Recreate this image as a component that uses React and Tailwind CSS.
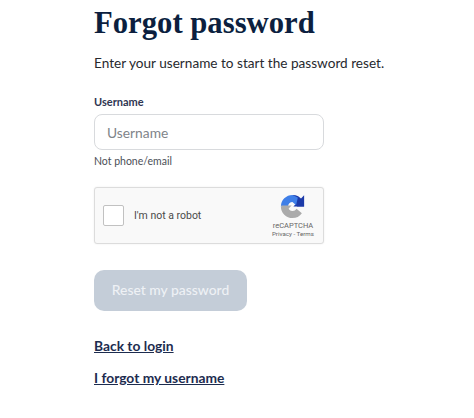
function RecaptchaLogo() {
  return (
    <svg viewBox="0 0 28 28" className="w-[25px] h-[25px]">
      <path d="M14 1 A13 13 0 0 1 25 7 L27 14 L19 14 A5 5 0 0 0 14 9 Z" fill="#1c3aa9" />
      <path d="M27 1.5 L27 14 L15 14 Z" fill="#1c3aa9" />
      <path d="M14 1 A13 13 0 0 0 1 14 L9 14 A5 5 0 0 1 14 9 L18 12.5 L20 4 Z" fill="#3f7fe8" />
      <path d="M1 14 A13 13 0 0 0 14 27 A13 13 0 0 0 24.5 21.5 L18.5 16.5 A5 5 0 0 1 14 19 A5 5 0 0 1 9 14 Z" fill="#ababab" />
      <path d="M1 13 L13 13 L7 19 Z" fill="#ababab" />
    </svg>
  );
}

export default function App() {
  return (
    <div className="min-h-[418px] bg-white pl-[94px] font-['Lato','Liberation_Sans',sans-serif] overflow-hidden">
      <h1 className="pt-[5px] text-[30.7px] leading-[36px] font-bold text-[#0c1f3f] font-['Liberation_Serif',serif] whitespace-nowrap">
        Forgot password
      </h1>
      <p className="mt-[11px] text-[13.6px] leading-[22px] text-[#27292e] whitespace-nowrap">
        Enter your username to start the password reset.
      </p>

      <label className="block mt-[21px] text-[11px] leading-[14px] font-bold text-[#2f3652]">Username</label>
      <input
        placeholder="Username"
        className="block mt-[5px] w-[230px] h-[36px] px-[12px] text-[13.8px] bg-white border border-[#d8dadd] rounded-[8px] placeholder:text-[#80848a]"
      />
      <p className="mt-[4px] text-[10.5px] leading-[14px] text-[#4b4f57]">Not phone/email</p>

      <div className="mt-[19px] w-[230px] h-[57px] flex items-center justify-between pl-[8px] pr-[9px] bg-[#f9f9f9] border border-[#dcdcdc] rounded-[3px] shadow-[0_0_2px_rgba(0,0,0,0.08)]">
        <div className="flex items-center gap-[10px]">
          <div className="w-[21px] h-[21px] bg-white border-[1.5px] border-[#c1c1c1] rounded-[2px]" />
          <span className="text-[10.5px] text-[#4a4a4a] font-['Roboto',sans-serif]">I'm not a robot</span>
        </div>
        <div className="flex flex-col items-center font-['Roboto',sans-serif]">
          <RecaptchaLogo />
          <span className="mt-[2px] text-[7.5px] leading-[9px] text-[#666]">reCAPTCHA</span>
          <span className="text-[6.2px] leading-[8px] text-[#666]">Privacy - Terms</span>
        </div>
      </div>

      <button className="block mt-[26px] w-[153px] h-[41px] rounded-[10px] bg-[#c4cdd8] text-[13.9px] font-medium text-[#eef1f5]">
        Reset my password
      </button>

      <a className="block mt-[26px] text-[13.8px] leading-[18px] font-bold text-[#1d2c4f] underline">Back to login</a>
      <a className="block mt-[14px] text-[13.8px] leading-[18px] font-bold text-[#1d2c4f] underline">I forgot my username</a>
    </div>
  );
}
